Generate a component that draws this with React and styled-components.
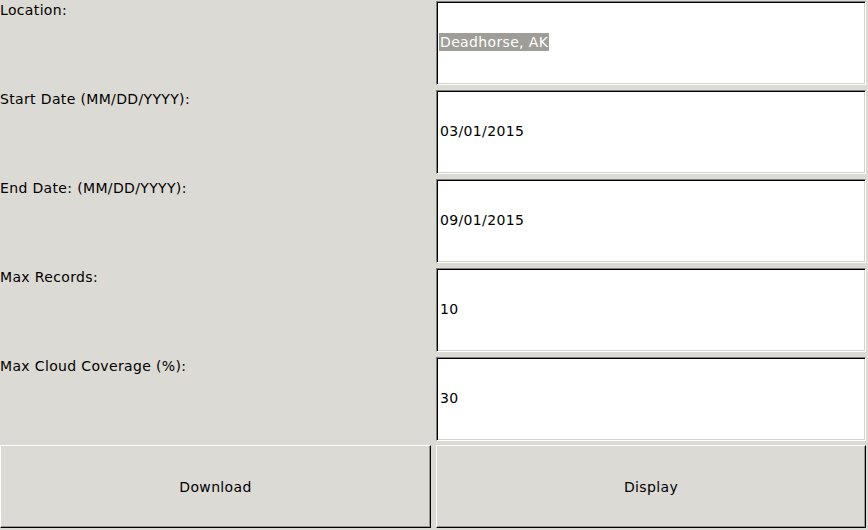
import React from "react";
import styled, { createGlobalStyle } from "styled-components";

const fields = [
  { label: "Location:", value: "Deadhorse, AK", selected: true },
  { label: "Start Date (MM/DD/YYYY):", value: "03/01/2015" },
  { label: "End Date: (MM/DD/YYYY):", value: "09/01/2015" },
  { label: "Max Records:", value: "10" },
  { label: "Max Cloud Coverage (%):", value: "30" },
];

const GlobalStyle = createGlobalStyle`
  html, body {
    margin: 0;
    padding: 0;
    background: #dcdad5;
  }
  body {
    font-family: "DejaVu Sans", sans-serif;
    font-size: 14px;
    letter-spacing: 0.35px;
    color: #000;
  }
`;

const Window = styled.div`
  width: 868px;
  height: 530px;
  display: grid;
  grid-template-columns: 434px 434px;
  grid-template-rows: repeat(5, 89px) 85px;
  background: #dcdad5;
  overflow: hidden;
`;

const Label = styled.div`
  padding: 1px 0 0 0;
  line-height: 18px;
  white-space: nowrap;
`;

const Entry = styled.div`
  margin: 1px 2px 4px 2px;
  box-sizing: border-box;
  background: #fff;
  border: 1px solid;
  border-color: #7f7f7f #ffffff #ffffff #7f7f7f;
  box-shadow: inset 1px 1px 0 #000, inset -1px -1px 0 #d4d2cd;
  display: flex;
  align-items: center;
  padding: 0 2px 2px 2px;
`;

const Value = styled.span`
  line-height: 18px;
  padding: 0 1px;
  background: ${(p) => (p.$selected ? "#9e9d97" : "transparent")};
  color: ${(p) => (p.$selected ? "#fff" : "#000")};
`;

const Button = styled.div`
  box-sizing: border-box;
  margin: ${(p) => (p.$left ? "0 3px 2px 0" : "0 2px 2px 2px")};
  border: 1px solid;
  border-color: #ffffff #000000 #000000 #ffffff;
  box-shadow: inset -1px -1px 0 #9a9893;
  display: flex;
  align-items: center;
  justify-content: center;
  background: #dcdad5;
`;

export default function App() {
  return (
    <>
      <GlobalStyle />
      <Window>
        {fields.map((f) => (
          <React.Fragment key={f.label}>
            <Label>{f.label}</Label>
            <Entry>
              <Value $selected={f.selected}>{f.value}</Value>
            </Entry>
          </React.Fragment>
        ))}
        <Button $left>Download</Button>
        <Button>Display</Button>
      </Window>
    </>
  );
}
